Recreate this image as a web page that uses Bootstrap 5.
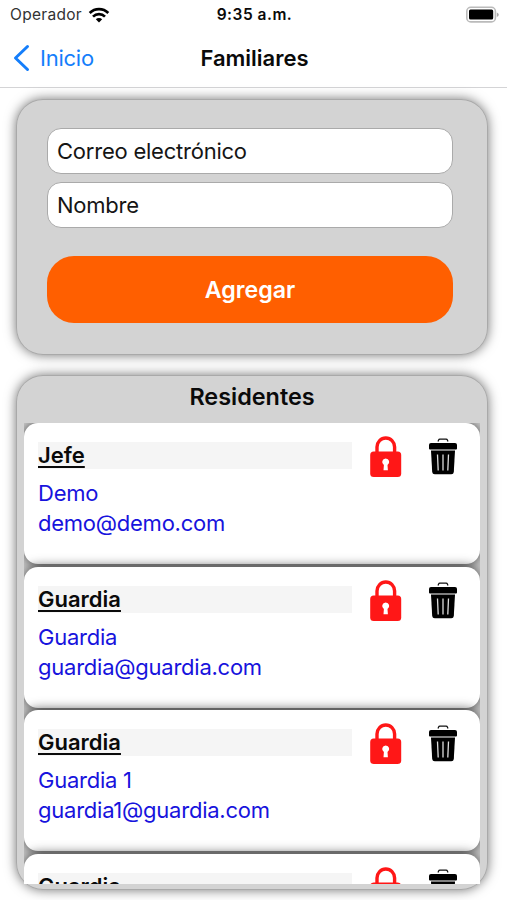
<!DOCTYPE html>
<html lang="es">
<head>
<meta charset="utf-8">
<meta name="viewport" content="width=device-width, initial-scale=1">
<title>Familiares</title>
<link href="https://cdn.jsdelivr.net/npm/bootstrap@5.3.0/dist/css/bootstrap.min.css" rel="stylesheet">
<style>
body{font-family:Inter,"Liberation Sans",sans-serif;font-size:22px;line-height:30px;color:#0a0a0a;height:900px;overflow:hidden;background:#fff}
.status-bar{height:30px;font-size:15.5px;line-height:30px;padding:0 8px 0 10px}
.carrier{color:#333;width:74px;letter-spacing:.3px;white-space:nowrap}
.clock{font-weight:600;letter-spacing:.5px}
.side{flex:1 1 0}
.title-bar{height:58px;border-bottom:1px solid #d4d4d6;padding:0 12px 2px 13px}
.back-link{color:#147efb;text-decoration:none;letter-spacing:-.25px;padding-top:6px}
.screen-title{font-weight:600;padding-left:1px}
.panel{background:#d3d3d3;border-radius:27px;box-shadow:inset 0 0 0 1px #a9a9a9,0 0 12px 0 rgba(0,0,0,.55);margin:0 19px 0 16px}
.form-panel{height:256px;margin-top:11px;padding:29px 35px 0 31px}
.field{height:46px;border:1px solid #aaa;border-radius:14px;padding:0 9px;font-size:22px;letter-spacing:-.23px;color:#111;background:#fff}
.field::placeholder{color:#151515;opacity:1}
.add-btn,.add-btn:hover{height:67px;border-radius:27px;background:#ff5f00;color:#fff;font-weight:600;font-size:23.2px;border:0;margin-top:28px;padding-top:8px}
.people-panel{height:515px;margin-top:20px;padding:1px 8px 0 8px}
.people-title{height:47px;line-height:42px;font-weight:600;font-size:23.4px}
.people-list{height:461px;overflow:hidden}
.person{flex:none;height:141px;margin-bottom:2.6px;background:#fff;border-radius:14px;box-shadow:0 0 12px rgba(0,0,0,.72);padding:19px 22px 0 14px}
.role{background:#f5f5f5;height:27px;line-height:27px;width:314px;font-weight:600;text-decoration:underline;text-decoration-thickness:2px;text-underline-offset:3px;text-decoration-skip-ink:none}
.contact{color:#1713dd;margin-top:9px;line-height:30.3px;letter-spacing:-.24px}
.icons{margin-top:-6px;gap:26px}
</style>
<script src="https://cdn.jsdelivr.net/npm/bootstrap@5.3.0/dist/js/bootstrap.bundle.min.js"></script>
</head>
<body>
<svg class="d-none">
  <symbol id="lock" viewBox="0 0 32 42">
    <path d="M7 17V11a8.800 9 0 0 1 17.600 0v6" fill="none" stroke="#ff1717" stroke-width="3.400"/>
    <rect x=".2" y="15.500" width="31" height="25.500" rx="3.500" fill="#ff1717"/>
    <path d="M15.700 22.500a3.500 3.500 0 0 1 1.800 6.500l.4 5.200h-4.400l.4-5.200a3.500 3.500 0 0 1 1.800-6.500z" fill="#fff"/>
  </symbol>
  <symbol id="trash" viewBox="0 0 30 42">
    <path d="M10 5.500l.6-1.500q.3-.8 1.300-.8h6.200q1 0 1.300.8l.6 1.500" fill="none" stroke="#111" stroke-width="1.200"/>
    <path d="M3 7h24q2 0 2 2v3.500q0 1-1 1H2q-1 0-1-1V9q0-2 2-2z"/>
    <path d="M3 14.600h24l-1.200 21.400q-.2 2.300-2.500 2.300H6.700q-2.300 0-2.500-2.300z"/>
    <path d="M9.500 18.500l.7 16M15 18.500v16M20.500 18.500l-.7 16" fill="none" stroke="#ddd" stroke-width="1.300"/>
  </symbol>
</svg>
<header>
  <div class="status-bar d-flex align-items-center">
    <div class="side d-flex align-items-center"><span class="carrier">Operador</span>
      <svg class="ms-1" width="22" height="16" viewBox="0 0 22 16"><g fill="none" stroke="#000" stroke-width="2.700"><path d="M1.700 6a13.200 13.200 0 0 1 18.600 0"/><path d="M5 9.600a8.500 8.500 0 0 1 12 0"/></g><path d="M11 15.600L7.800 12.300a4.600 4.600 0 0 1 6.400 0z"/></svg>
    </div>
    <span class="clock">9:35 a.m.</span>
    <div class="side d-flex justify-content-end">
      <svg width="34" height="18" viewBox="0 0 34 18"><rect x="1.800" y="1.300" width="28.600" height="14.600" rx="4" fill="#fff" stroke="#bbb" stroke-width="1.600"/><rect x="4" y="3.600" width="24.200" height="10" rx="1.500"/><path d="M31.800 6.500q2 1 2 2.300t-2 2.300z" fill="#aaa"/></svg>
    </div>
  </div>
  <nav class="title-bar d-flex align-items-center">
    <div class="side"><a href="#" class="back-link d-inline-flex align-items-center"><svg class="me-2" width="19" height="28" viewBox="0 0 19 28"><path d="M14.500 2.500L2.500 14l12 11.500" fill="none" stroke="#147efb" stroke-width="3" stroke-linecap="round" stroke-linejoin="round"/></svg>Inicio</a></div>
    <span class="screen-title">Familiares</span>
    <div class="side"></div>
  </nav>
</header>
<main>
  <form class="panel form-panel">
    <input class="form-control field" type="email" placeholder="Correo electrónico" aria-label="Correo electrónico">
    <input class="form-control field mt-2" type="text" placeholder="Nombre" aria-label="Nombre">
    <button type="button" class="btn add-btn w-100">Agregar</button>
  </form>
  <section class="panel people-panel">
    <h2 class="people-title text-center m-0">Residentes</h2>
    <div class="people-list d-flex flex-column">
      <article class="person d-flex justify-content-between align-items-start">
        <div><div class="role">Jefe</div><div class="contact">Demo<br>demo@demo.com</div></div>
        <div class="icons d-flex"><svg width="32" height="42"><use href="#lock"/></svg><svg width="30" height="42"><use href="#trash"/></svg></div>
      </article>
      <article class="person d-flex justify-content-between align-items-start">
        <div><div class="role">Guardia</div><div class="contact">Guardia<br>guardia@guardia.com</div></div>
        <div class="icons d-flex"><svg width="32" height="42"><use href="#lock"/></svg><svg width="30" height="42"><use href="#trash"/></svg></div>
      </article>
      <article class="person d-flex justify-content-between align-items-start">
        <div><div class="role">Guardia</div><div class="contact">Guardia 1<br>guardia1@guardia.com</div></div>
        <div class="icons d-flex"><svg width="32" height="42"><use href="#lock"/></svg><svg width="30" height="42"><use href="#trash"/></svg></div>
      </article>
      <article class="person d-flex justify-content-between align-items-start">
        <div><div class="role">Guardia</div></div>
        <div class="icons d-flex"><svg width="32" height="42"><use href="#lock"/></svg><svg width="30" height="42"><use href="#trash"/></svg></div>
      </article>
    </div>
  </section>
</main>
</body>
</html>
